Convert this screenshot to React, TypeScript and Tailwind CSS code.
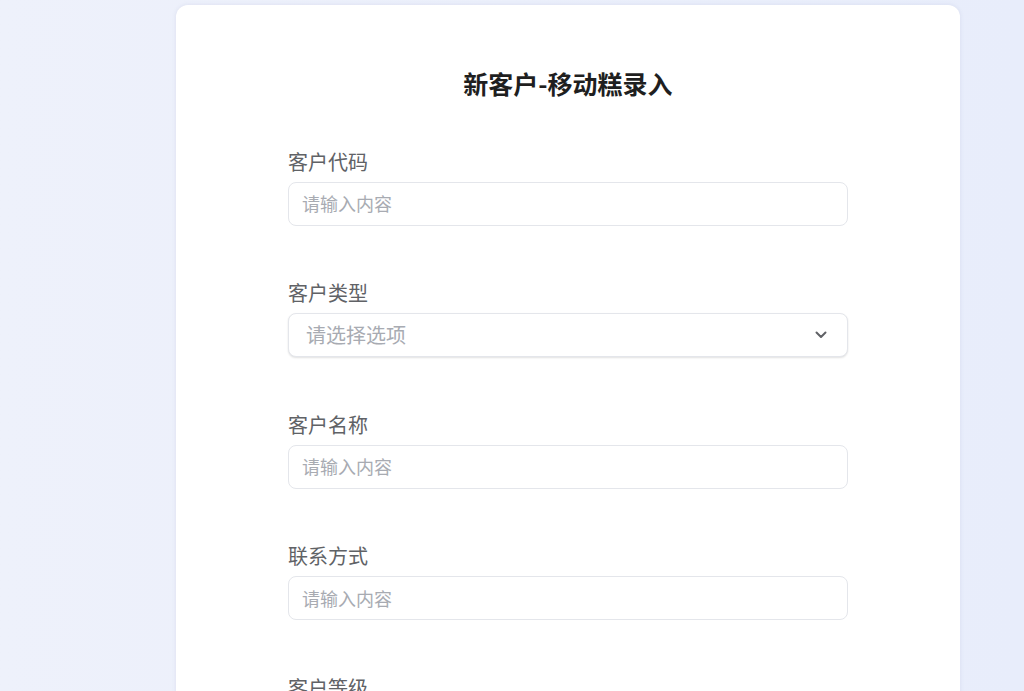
import React from "react";

function Chevron() {
  return (
    <svg width="12" height="8" viewBox="0 0 12 8" fill="none">
      <path d="M1.5 1.5 L6 6 L10.5 1.5" stroke="#606266" strokeWidth="2" strokeLinecap="round" strokeLinejoin="round" />
    </svg>
  );
}

function Label({ children }: { children: React.ReactNode }) {
  return <div className="h-[28px] leading-[28px] text-[20px] text-[#606266] mb-[6px]">{children}</div>;
}

function TextField({ label }: { label: string }) {
  return (
    <div className="mb-[53.5px]">
      <Label>{label}</Label>
      <div className="h-[44px] w-full rounded-[8px] border border-[#e4e6eb] bg-white flex items-center px-[13px]">
        <span className="text-[18px] text-[#a8abb2]">请输入内容</span>
      </div>
    </div>
  );
}

function SelectField({ label }: { label: string }) {
  return (
    <div className="mb-[53.5px]">
      <Label>{label}</Label>
      <div className="h-[44px] w-full rounded-[8px] border border-[#e4e6eb] bg-white flex items-center justify-between pl-[17px] pr-[20px] shadow-[0_1px_2px_rgba(0,0,0,0.12)]">
        <span className="text-[20px] text-[#a8abb2]">请选择选项</span>
        <Chevron />
      </div>
    </div>
  );
}

export default function App() {
  return (
    <div
      className="w-[1024px] h-[691px] overflow-hidden bg-gradient-to-r from-[#eef1fb] to-[#e8edfb]"
      style={{ fontFamily: '"Noto Sans CJK SC", "Noto Sans", sans-serif' }}
    >
      <div className="ml-[176px] mt-[5px] w-[784px] h-[800px] bg-white rounded-[12px] shadow-[0_0_4px_rgba(120,130,170,0.15)] pt-[60px] px-[112px]">
        <h1 className="h-[36px] leading-[36px] text-center text-[25px] font-bold text-[#1f1f1f] mb-[46.5px]">
          新客户-移动糕录入
        </h1>
        <TextField label="客户代码" />
        <SelectField label="客户类型" />
        <TextField label="客户名称" />
        <TextField label="联系方式" />
        <TextField label="客户等级" />
      </div>
    </div>
  );
}
